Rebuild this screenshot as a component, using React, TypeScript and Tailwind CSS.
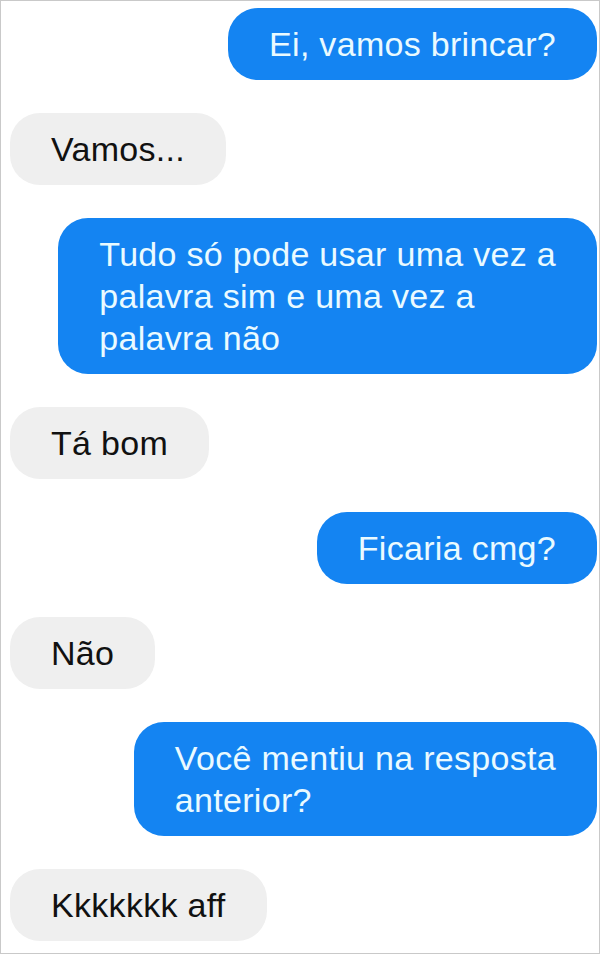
interface Message {
  from: 'me' | 'them';
  lines: string[];
}

const messages: Message[] = [
  { from: 'me', lines: ['Ei, vamos brincar?'] },
  { from: 'them', lines: ['Vamos...'] },
  { from: 'me', lines: ['Tudo só pode usar uma vez a', 'palavra sim e uma vez a', 'palavra não'] },
  { from: 'them', lines: ['Tá bom'] },
  { from: 'me', lines: ['Ficaria cmg?'] },
  { from: 'them', lines: ['Não'] },
  { from: 'me', lines: ['Você mentiu na resposta', 'anterior?'] },
  { from: 'them', lines: ['Kkkkkkk aff'] },
];

export default function App() {
  return (
    <div className="w-[600px] h-[954px] bg-white border border-[#c9c9c9] overflow-hidden font-['Liberation_Sans',Arial,sans-serif]">
      <div className="flex flex-col gap-[33px] pt-[7px] pl-[9px] pr-[2px]">
        {messages.map((m, i) => (
          <div
            key={i}
            className={`flex ${m.from === 'me' ? 'justify-end' : 'justify-start'}`}
          >
            <div
              className={`w-fit rounded-[30px] px-[41px] py-[15px] text-[34px] leading-[42px] tracking-[0.3px] whitespace-nowrap ${
                m.from === 'me'
                  ? 'bg-[#1484f2] text-[#eafaff]'
                  : 'bg-[#efefef] text-[#111111]'
              }`}
            >
              {m.lines.map((line, j) => (
                <div key={j}>{line}</div>
              ))}
            </div>
          </div>
        ))}
      </div>
    </div>
  );
}
